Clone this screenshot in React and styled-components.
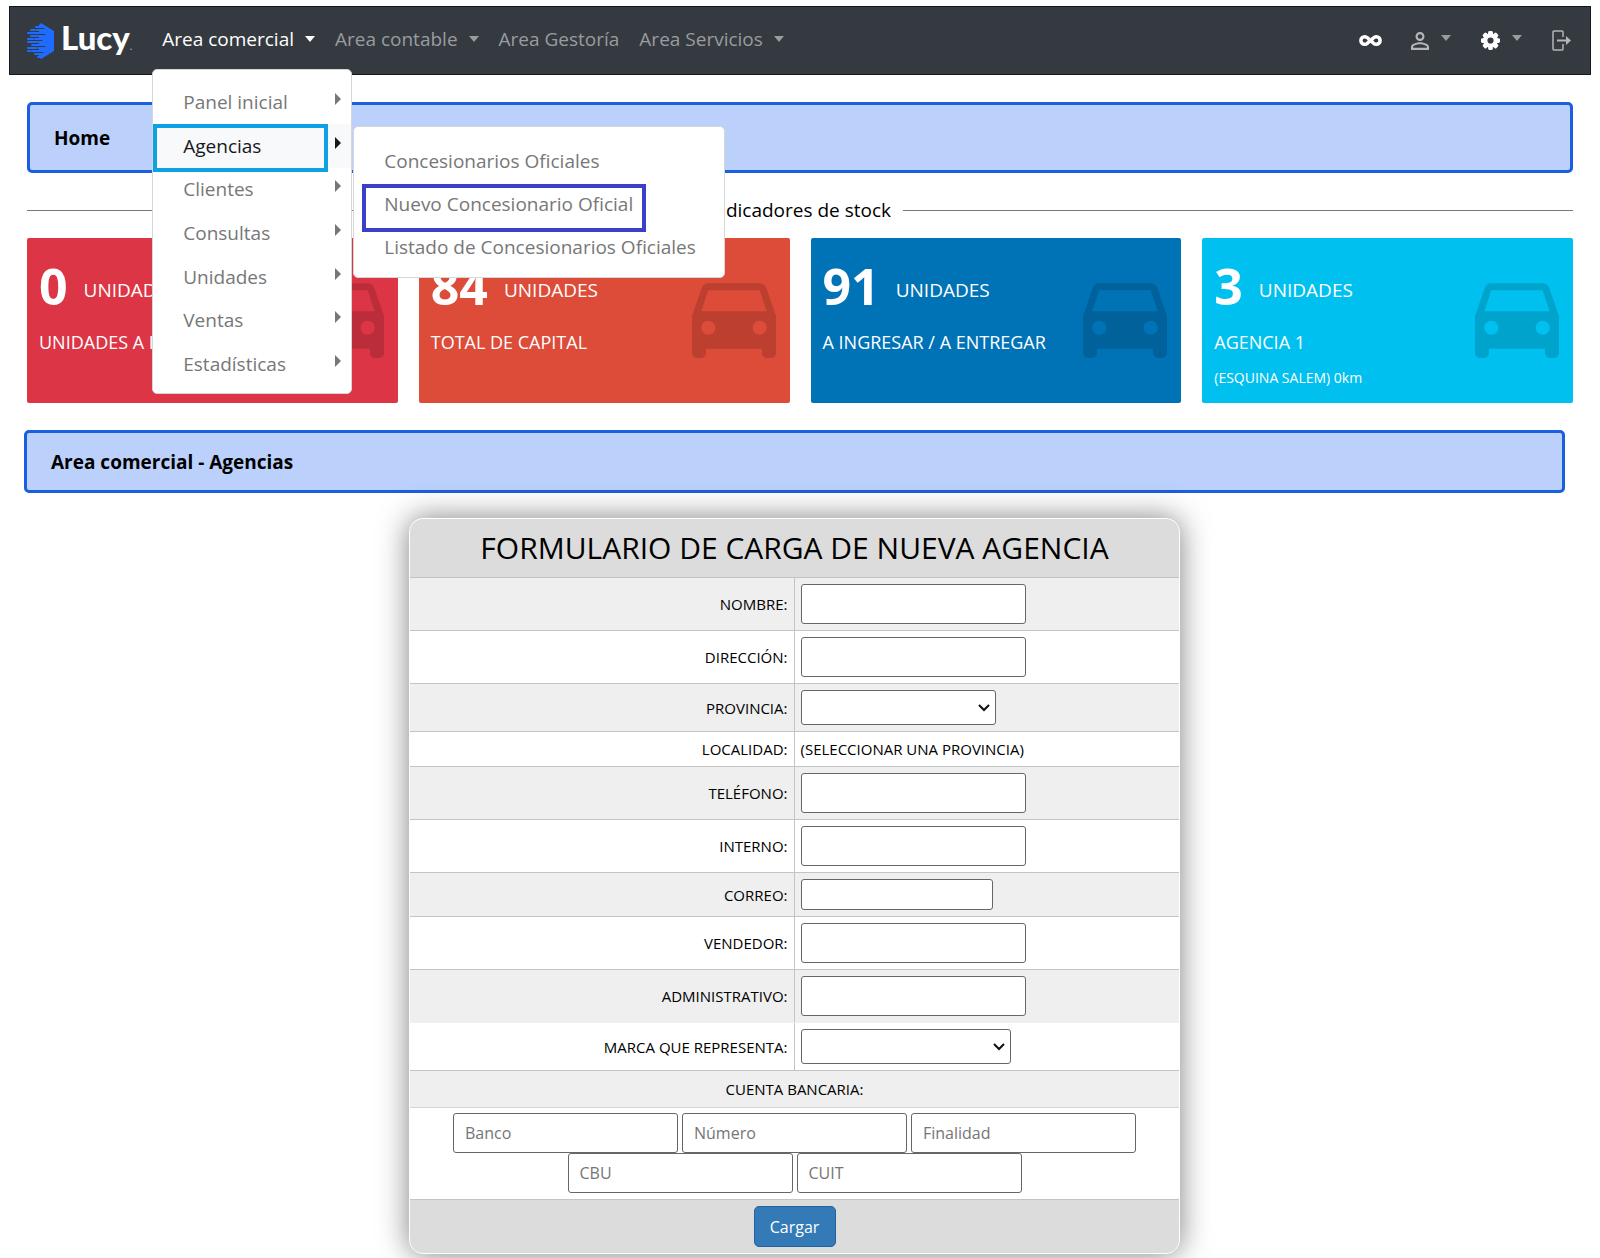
import React, { useState } from "react";
import styled, { createGlobalStyle } from "styled-components";
import {
  MdAllInclusive,
  MdDirectionsCar,
  MdPersonOutline,
} from "react-icons/md";

const GlobalStyle = createGlobalStyle`
  * {
    box-sizing: border-box;
  }
  body {
    margin: 0;
    background: #fff;
    color: #000;
    font-family: "Open Sans", "Noto Sans", sans-serif;
    font-size: 15px;
    line-height: 22px;
  }
  h1, h2, p, ul {
    margin: 0;
    padding: 0;
  }
  ul {
    list-style: none;
  }
  button, input, select {
    font-family: inherit;
    font-size: inherit;
  }
`;

/* ---------- navbar ---------- */

const Navbar = styled.nav`
  display: flex;
  align-items: center;
  justify-content: space-between;
  height: 69px;
  margin: 6px 9px 0;
  padding: 0 18px 0 17px;
  background: #343a40;
  border: 1px solid #16191c;
`;

const NavSide = styled.div`
  display: flex;
  align-items: center;
`;

const Brand = styled.a`
  display: flex;
  align-items: center;
  gap: 6px;
  margin-right: 20px;
  color: #fff;
  font-family: Lato, sans-serif;
  font-size: 33px;
  font-weight: 900;
  line-height: 40px;
  text-decoration: none;

  span {
    padding-top: 2px;
  }
  small {
    font-size: 10px;
    color: #9aa0a6;
  }
`;

const NavItem = styled.div`
  position: relative;
  padding: 0 10px 4px;
`;

const NavButton = styled.button`
  display: flex;
  align-items: center;
  gap: 11px;
  padding: 0;
  border: 0;
  background: none;
  color: ${props => (props.$active ? "#fff" : "#999c9f")};
  font-size: 19px;
  line-height: 28px;
  cursor: pointer;
`;

const Caret = styled.span`
  border-top: 6px solid currentColor;
  border-left: 5px solid transparent;
  border-right: 5px solid transparent;
`;

const IconBar = styled.div`
  display: flex;
  align-items: center;
  gap: 30px;
`;

const IconButton = styled.button`
  display: flex;
  align-items: center;
  gap: 12px;
  padding: 0;
  border: 0;
  background: none;
  color: ${props => (props.$bright ? "#fff" : "#b4b6b8")};
  cursor: pointer;

  span {
    margin-bottom: 6px;
    color: #999c9f;
  }
`;

const InfiniteIcon = styled(MdAllInclusive)`
  overflow: visible;

  path:not([fill="none"]) {
    stroke: currentColor;
    stroke-width: 2px;
  }
`;

/* ---------- dropdown ---------- */

const Menu = styled.ul`
  position: absolute;
  z-index: 2;
  top: 44px;
  left: 0;
  display: grid;
  width: 200px;
  min-height: 325px;
  padding: 11px 0 7px;
  background: #fff;
  border: 1px solid #d5d6d8;
  border-radius: 5px;
`;

const SubMenu = styled(Menu)`
  top: 2px;
  left: 200px;
  width: 372px;
  min-height: 152px;
  padding: 12px 0 8px;
`;

const MenuItem = styled.li`
  position: relative;
  display: flex;
  align-items: center;
  justify-content: space-between;
  padding: 0 10px 0 30px;
  background: ${props => (props.$active ? "#f8f9fa" : "transparent")};
  color: ${props => (props.$active ? "#16181b" : "#777")};
`;

const MenuLink = styled.a`
  color: inherit;
  font-size: 19px;
  line-height: 28px;
  white-space: nowrap;
  text-decoration: none;
`;

const SideCaret = styled.span`
  margin-bottom: 6px;
  border-left: 6px solid currentColor;
  border-top: 6px solid transparent;
  border-bottom: 6px solid transparent;
`;

// recuadro que marca la opcion elegida
const Marker = styled.span`
  position: absolute;
  z-index: 1;
  top: ${props => props.$top};
  left: ${props => props.$left};
  width: ${props => props.$width};
  height: 48px;
  border: 4px solid ${props => props.$color};
  pointer-events: none;
`;

/* ---------- home ---------- */

const Banner = styled.h1`
  display: flex;
  align-items: center;
  height: ${props => (props.$small ? "63px" : "71px")};
  padding: 0 24px;
  background: #bbd0fa;
  border: 3px solid #1b5ee0;
  border-radius: 5px;
  font-size: 19px;
  font-weight: 700;
`;

const Home = styled.section`
  margin: 27px 27px 0;
`;

const Separator = styled.h2`
  display: flex;
  align-items: center;
  gap: 12px;
  margin: 23px 0 14px;
  font-size: 19px;
  font-weight: 400;
  line-height: 28px;

  &::before,
  &::after {
    content: "";
    flex: 1;
    border-top: 1px solid #777;
  }
`;

const Cards = styled.div`
  display: grid;
  grid-template-columns: repeat(4, 1fr);
  gap: 21px;
`;

const Card = styled.article`
  display: flex;
  align-items: center;
  justify-content: space-between;
  height: 165px;
  padding: 0 0 0 12px;
  background: ${props => props.$color};
  border-radius: 2px;
  color: #fff;
  font-size: 19px;
  line-height: 28px;

  svg {
    flex: none;
    margin-bottom: 10px;
    color: rgba(0, 0, 0, 0.15);
  }
`;

const CardText = styled.div`
  align-self: flex-start;
  padding-top: 13px;
  white-space: nowrap;

  small {
    font-size: 14px;
  }
`;

const Count = styled.p`
  display: flex;
  align-items: center;
  gap: 16px;
  line-height: 70px;

  strong {
    font-size: 50px;
  }
  span {
    padding-top: 8px;
    line-height: 28px;
  }
`;

const CardTitle = styled.p`
  margin: 7px 0 6px;
  font-size: 18px;
`;

/* ---------- formulario ---------- */

const Agencias = styled.section`
  margin: 27px 35px 0 24px;
  padding-bottom: 5px;
`;

const Form = styled.form`
  max-width: 771px;
  margin: 25px auto 0;
  overflow: hidden;
  background: #fff;
  border: 1px solid #fff;
  border-radius: 14px;
  box-shadow: 0 0 30px rgba(0, 0, 0, 0.5);
`;

const FormTitle = styled.h2`
  padding: 9px 0;
  background: #dcdcdc;
  border-bottom: 1px solid #c4c4c4;
  font-size: 30px;
  font-weight: 400;
  line-height: 40px;
  text-align: center;
`;

const Row = styled.div`
  display: grid;
  grid-template-columns: 1fr 1fr;
  background: ${props => (props.$gray ? "#efefef" : "#fff")};
  border-bottom: 1px solid ${props => (props.$plain ? "#efefef" : "#c4c4c4")};
`;

const Label = styled.label`
  display: flex;
  align-items: center;
  justify-content: flex-end;
  padding-right: 6px;
  border-right: 1px solid #c4c4c4;
`;

const Cell = styled.div`
  display: flex;
  padding: 6px;
`;

const Input = styled.input`
  width: ${props => props.$width || 225}px;
  height: ${props => props.$height || 40}px;
  padding: 0 11px;
  background: #fff;
  border: 1px solid #666;
  border-radius: 3px;
  font-size: 16px;

  &::placeholder {
    color: #757575;
  }
`;

const SelectBox = styled.div`
  position: relative;
  width: ${props => props.$width}px;
  height: ${props => props.$height}px;

  svg {
    position: absolute;
    top: 50%;
    right: 6px;
    margin-top: -4px;
    pointer-events: none;
  }
`;

const Select = styled.select`
  width: 100%;
  height: 100%;
  padding: 0 24px 0 8px;
  appearance: none;
  background: #fff;
  border: 1px solid #666;
  border-radius: 3px;
`;

const BankTitle = styled.div`
  padding: 7px;
  background: #efefef;
  border-bottom: 1px solid #d4d4d4;
  text-align: center;
`;

const BankFields = styled.div`
  display: flex;
  flex-wrap: wrap;
  justify-content: center;
  column-gap: 4px;
  padding: 5px 40px 6px;
  border-bottom: 1px solid #c4c4c4;
`;

const FormFooter = styled.div`
  display: flex;
  justify-content: center;
  padding: 6px;
  background: #dcdcdc;
`;

const Submit = styled.button`
  width: 82px;
  height: 41px;
  padding: 0;
  background: #337ab7;
  border: 1px solid #22649f;
  border-radius: 5px;
  color: #fff;
  font-size: 16px;
  cursor: pointer;
`;

const menu = [
  "Panel inicial",
  "Agencias",
  "Clientes",
  "Consultas",
  "Unidades",
  "Ventas",
  "Estadísticas",
];

const submenu = [
  "Concesionarios Oficiales",
  "Nuevo Concesionario Oficial",
  "Listado de Concesionarios Oficiales",
];

const cards = [
  { count: 0, title: "UNIDADES A INGRESAR", color: "#dc3545" },
  { count: 84, title: "TOTAL DE CAPITAL", color: "#dd4b39" },
  { count: 91, title: "A INGRESAR / A ENTREGAR", color: "#0073b7" },
  {
    count: 3,
    title: "AGENCIA 1",
    note: "(ESQUINA SALEM) 0km",
    color: "#00c0ef",
  },
];

const fields = [
  { id: "nombre", label: "NOMBRE:" },
  { id: "direccion", label: "DIRECCIÓN:" },
  { id: "provincia", label: "PROVINCIA:", type: "select", width: 195, height: 35 },
  { id: "localidad", label: "LOCALIDAD:", type: "text" },
  { id: "telefono", label: "TELÉFONO:" },
  { id: "interno", label: "INTERNO:" },
  { id: "correo", label: "CORREO:", width: 192, height: 31 },
  { id: "vendedor", label: "VENDEDOR:" },
  { id: "administrativo", label: "ADMINISTRATIVO:", plain: true },
  { id: "marca", label: "MARCA QUE REPRESENTA:", type: "select", width: 210, height: 35 },
];

const bank = ["Banco", "Número", "Finalidad", "CBU", "CUIT"];

function Logo() {
  return (
    <svg width="28" height="36" viewBox="0 0 28 36" aria-hidden="true">
      <path d="M14 0 L27 8 V28 L14 36 L12 34 V2 Z" fill="#1f6bff" />
      <g stroke="#1f6bff" strokeWidth="2" strokeLinecap="round">
        <path d="M9 4H14M4 7H8M10 7H14M1 10H14M4 13H14M1 16H6M8 16H14M1 19H14M5 22H14M1 25H9M11 25H14M1 28H3M5 28H14M8 31H14M11 34H14" />
      </g>
      <g stroke="#343a40" strokeWidth="1" strokeLinecap="round">
        <path d="M10 5.500H17M9 11.500H18M11 17.500H15M10 23.500H18M9 29.500H16" />
      </g>
    </svg>
  );
}

function Gear() {
  const teeth = [0, 45, 90, 135, 180, 225, 270, 315];
  return (
    <svg width="19" height="19" viewBox="0 0 20 20" aria-hidden="true">
      <circle cx="10" cy="10" r="5.500" fill="none" stroke="currentColor" strokeWidth="4.500" />
      {teeth.map(a => (
        <rect
          key={a}
          x="7.500"
          y="0"
          width="5"
          height="4"
          rx="1.500"
          fill="currentColor"
          transform={`rotate(${a} 10 10)`}
        />
      ))}
    </svg>
  );
}

function Exit() {
  return (
    <svg width="20" height="22" viewBox="0 0 20 22" fill="none" stroke="currentColor" strokeWidth="1.500" aria-hidden="true">
      <path d="M11 7V2Q11 1 10 1H2Q1 1 1 2V19Q1 20 2 20H10Q11 20 11 19V14" />
      <path d="M5 10.500H15" strokeWidth="2" />
      <path d="M14 6L19 10.500L14 15Z" fill="currentColor" stroke="none" />
    </svg>
  );
}

function Chevron() {
  return (
    <svg width="12" height="8" viewBox="0 0 12 8" fill="none" stroke="#111" strokeWidth="2" aria-hidden="true">
      <path d="M1 1L6 6L11 1" />
    </svg>
  );
}

function Header() {
  return (
    <Navbar>
      <NavSide>
        <Brand href="#">
          <Logo />
          <span>
            Lucy<small>.</small>
          </span>
        </Brand>
        <NavItem>
          <NavButton $active>
            Area comercial <Caret />
          </NavButton>
          <DropMenu />
        </NavItem>
        <NavItem>
          <NavButton>
            Area contable <Caret />
          </NavButton>
        </NavItem>
        <NavItem>
          <NavButton>Area Gestoría</NavButton>
        </NavItem>
        <NavItem>
          <NavButton>
            Area Servicios <Caret />
          </NavButton>
        </NavItem>
      </NavSide>
      <IconBar>
        <IconButton $bright aria-label="Infinito">
          <InfiniteIcon size={21} />
        </IconButton>
        <IconButton aria-label="Usuario">
          <MdPersonOutline size={18} viewBox="4 4 16 16" />
          <Caret />
        </IconButton>
        <IconButton $bright aria-label="Configuración">
          <Gear />
          <Caret />
        </IconButton>
        <IconButton aria-label="Salir">
          <Exit />
        </IconButton>
      </IconBar>
    </Navbar>
  );
}

function DropMenu() {
  return (
    <Menu>
      {menu.map(item => (
        <MenuItem key={item} $active={item === "Agencias"}>
          <MenuLink href="#">{item}</MenuLink>
          <SideCaret />
          {item === "Agencias" && (
            <>
              <Marker $top="0" $left="0" $width="175px" $color="#0ea2e4" />
              <SubMenu>
                {submenu.map((sub, i) => (
                  <MenuItem key={sub}>
                    <MenuLink href="#">{sub}</MenuLink>
                    {i === 1 && (
                      <Marker $top="2px" $left="8px" $width="284px" $color="#3a41c8" />
                    )}
                  </MenuItem>
                ))}
              </SubMenu>
            </>
          )}
        </MenuItem>
      ))}
    </Menu>
  );
}

function Field({ field }) {
  const { id, label, type, width, height } = field;
  let control = <Input id={id} name={id} $width={width} $height={height} />;
  if (type === "select") {
    control = (
      <SelectBox $width={width} $height={height}>
        <Select id={id} name={id}>
          <option value=""></option>
        </Select>
        <Chevron />
      </SelectBox>
    );
  }
  if (type === "text") {
    control = <output id={id}>(SELECCIONAR UNA PROVINCIA)</output>;
  }
  return (
    <>
      <Label htmlFor={id}>{label}</Label>
      <Cell>{control}</Cell>
    </>
  );
}

function App() {
  const [datos, setDatos] = useState({});

  return (
    <>
      <GlobalStyle />
      <Header />
      <Home>
        <Banner>Home</Banner>
        <Separator>Indicadores de stock</Separator>
        <Cards>
          {cards.map(card => (
            <Card key={card.title} $color={card.color}>
              <CardText>
                <Count>
                  <strong>{card.count}</strong>
                  <span>UNIDADES</span>
                </Count>
                <CardTitle>{card.title}</CardTitle>
                {card.note && <small>{card.note}</small>}
              </CardText>
              <MdDirectionsCar size={112} />
            </Card>
          ))}
        </Cards>
      </Home>
      <Agencias>
        <Banner $small>Area comercial - Agencias</Banner>
        <Form onSubmit={e => e.preventDefault()}>
          <FormTitle>FORMULARIO DE CARGA DE NUEVA AGENCIA</FormTitle>
          {fields.map((field, i) => (
            <Row key={field.id} $gray={i % 2 === 0} $plain={field.plain}>
              <Field field={field} />
            </Row>
          ))}
          <BankTitle>CUENTA BANCARIA:</BankTitle>
          <BankFields>
            {bank.map(name => (
              <Input
                key={name}
                aria-label={name}
                placeholder={name}
                value={datos[name] || ""}
                onChange={e => setDatos({ ...datos, [name]: e.target.value })}
              />
            ))}
          </BankFields>
          <FormFooter>
            <Submit type="submit">Cargar</Submit>
          </FormFooter>
        </Form>
      </Agencias>
    </>
  );
}

export default App;
